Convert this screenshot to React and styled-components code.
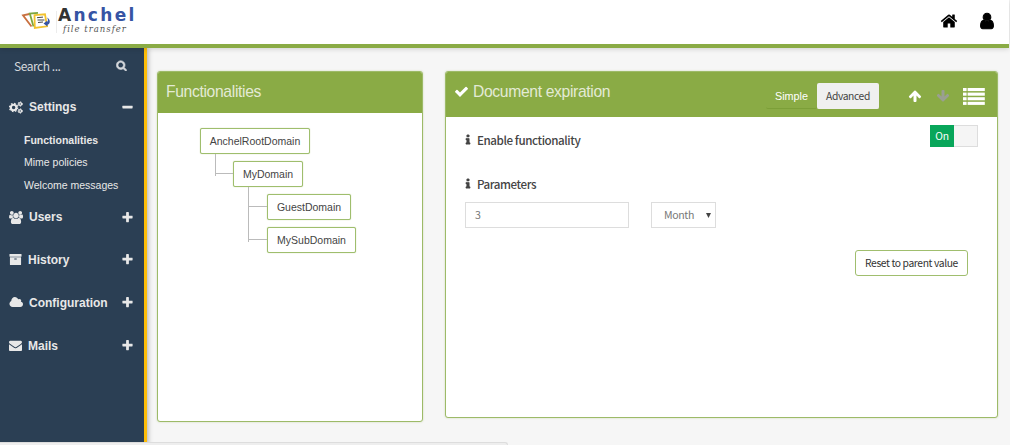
import React from 'react';
import styled, { createGlobalStyle } from 'styled-components';

const Global = createGlobalStyle`
  * { box-sizing: border-box; }
  body { margin: 0; background: #f6f6f6; overflow: hidden; font-family: "Liberation Sans", Arial, sans-serif; }
`;
const source = '"Noto Sans CJK SC", "Open Sans", sans-serif';

const Page = styled.div`width: 1010px; height: 445px; display: flex; flex-direction: column; overflow: hidden;`;
const Header = styled.header`
  height: 48px; flex: none; background: #fff; border-bottom: 4px solid #8aab45; display: flex;
  align-items: flex-start; justify-content: space-between; padding: 0 13px 0 21px;
  box-shadow: 0 1px 5px rgba(0,0,0,.16); z-index: 1; margin-right: 1px;
`;
const Brand = styled.div`display: flex; padding-top: 7px;`;
const Divider = styled.div`width: 1px; height: 22px; background: #ececec; margin: 4px 0 0 5px;`;
const BrandText = styled.div`display: flex; flex-direction: column; padding-left: 1px; height: 32px;`;
const BrandName = styled.div`
  font: 700 17px/17px "DejaVu Sans", sans-serif; color: #3654a4; letter-spacing: 2.3px; white-space: nowrap;
  &::first-letter { color: #333; }
`;
const BrandTag = styled.div`
  font: italic 8.5px/10px "DejaVu Serif", serif; color: #555; padding-left: 5px; letter-spacing: 1px; white-space: nowrap;
`;
const UserNav = styled.nav`display: flex; gap: 20px; padding-top: 12px;`;
const Body = styled.div`flex: 1; display: flex; min-height: 0;`;
const Sidebar = styled.aside`
  width: 147px; flex: none; background: #2b3f54; border-right: 3px solid #fdbd08; color: #e8e8e8;
  box-shadow: 1px 0 5px rgba(0,0,0,.3);
`;
const Search = styled.div`
  height: 35px; display: flex; align-items: center; justify-content: space-between; padding: 0 17px 0 14px;
  font: 12px/20px ${source}; color: #d5d8dc; letter-spacing: -.45px;
`;
const Group = styled.div`
  height: ${p => p.$h || 43}px; display: flex; align-items: center; padding: 0 10px 0 9px;
  font-size: 12px; font-weight: 700; gap: 6px;
`;
const GroupName = styled.span`flex: 1;`;
const SubMenu = styled.div`display: flex; flex-direction: column; height: 70px; padding-left: 24px;`;
const SubItem = styled.div`
  font-size: 10.5px; line-height: 22.4px; position: relative; top: -2px; white-space: nowrap;
  font-weight: ${p => (p.$active ? 700 : 400)};
`;
const Main = styled.main`flex: 1; display: flex; align-items: flex-start; gap: 22px; padding: 23px 0 0 10px;`;
const Panel = styled.section`
  width: ${p => p.$w}px; height: ${p => p.$h}px; background: #fff; border: 1px solid #9dba68;
  border-radius: 3px; box-shadow: 0 0 2px rgba(138,171,69,.4); flex: none;
`;
const PanelHead = styled.div`
  height: ${p => p.$h}px; background: #8aab45; color: #e3ead5; display: flex; padding: ${p => p.$pad};
  border-radius: 2px 2px 0 0; align-items: flex-start;
`;
const Title = styled.h2`margin: 0; font-size: 15.7px; line-height: 18px; font-weight: 400; flex: 1; letter-spacing: -.35px;`;
const Tree = styled.div`padding: 15px 0 0 42px;`;
const Node = styled.div`
  width: ${p => p.$w}px; height: 26px; border: 1px solid #9fbe6d; border-radius: 2px; font-size: 10.5px; color: #444;
  display: flex; align-items: center; justify-content: center; background: #fff; box-shadow: 0 0 1px #a9c47c;
`;
const Children = styled.div`margin-left: 15px; display: flex; flex-direction: column;`;
const Branch = styled.div`
  padding: 7px 0 0 ${p => p.$indent || 18}px; position: relative;
  &::before { content: ''; position: absolute; left: 0; top: 0; width: 1px; height: ${p => (p.$last ? 22 : 33)}px; background: #bbb; }
  &::after { content: ''; position: absolute; left: 0; top: 19px; width: ${p => p.$indent || 18}px; height: 1px; background: #bbb; }
`;
const Modes = styled.div`display: flex; height: 26px; margin-right: 29px;`;
const Mode = styled.div`
  width: ${p => p.$w}px; display: flex; align-items: center; justify-content: center;
  color: ${p => (p.$active ? '#444' : '#fff')}; background: ${p => (p.$active ? '#f0f0f0' : 'transparent')};
  border-bottom: 1px solid ${p => (p.$active ? '#f0f0f0' : '#7c9f38')}; border-radius: 2px;
  font-family: ${p => (p.$active ? source : '"Liberation Sans", sans-serif')};
  font-size: ${p => (p.$active ? 10.3 : 10.8)}px; letter-spacing: ${p => (p.$active ? -0.4 : 0)}px;
`;
const Tools = styled.div`display: flex; align-items: center; gap: 13.5px; height: 26px;`;
const Form = styled.div`padding: 14px 18px 0 19px; display: flex; flex-direction: column;`;
const Row = styled.div`display: flex; align-items: flex-start; justify-content: space-between; height: ${p => p.$h}px;`;
const Label = styled.div`
  display: flex; align-items: center; gap: 6px; font: 500 11.6px/16px ${source}; color: #444;
  letter-spacing: -.42px; padding-top: 1px;
`;
const Switch = styled.div`display: flex; width: 48px; height: 22px; margin: -6px 1px 0 0; border: 1px solid #ddd; border-left: 0; background: #f5f5f5;`;
const SwitchOn = styled.div`width: 24px; margin: -1px 0; background: #08a65a; color: #fff; font: 10.3px/22px ${source}; letter-spacing: -.3px; text-align: center;`;
const Fields = styled.div`display: flex; gap: 22px; height: 48px;`;
const Field = styled.div`
  width: ${p => p.$w}px; height: 26px; border: 1px solid #ddd; background: #fff; padding: 0 ${p => p.$pr || 9}px 0 ${p => p.$pl || 9}px;
  font: 10.6px/24px ${source}; color: #777; display: flex; align-items: center; justify-content: space-between; letter-spacing: -.4px;
`;
const Reset = styled.button`
  align-self: flex-end; margin-right: 11px; width: 113px; height: 26px; border: 1px solid #a0be6e; border-radius: 3px; background: #fff;
  font: 10.3px/20px ${source}; color: #333; padding: 0; white-space: nowrap; letter-spacing: -.38px;
`;
const StatusBubble = styled.div`
  position: absolute; left: 0; bottom: 0; width: 508px; height: 3px; background: #eee; border-top: 1px solid #ddd;
  border-right: 1px solid #ddd; border-radius: 0 3px 0 0; z-index: 2;
`;
const Glyph = styled.svg`display: block; flex: none; fill: ${p => p.$c || 'currentColor'};`;

const paths = {
  plus: 'M1600 736v192q0 40-28 68t-68 28h-416v416q0 40-28 68t-68 28h-192q-40 0-68-28t-28-68v-416h-416q-40 0-68-28t-28-68v-192q0-40 28-68t68-28h416v-416q0-40 28-68t68-28h192q40 0 68 28t28 68v416h416q40 0 68 28t28 68z',
  minus: 'M1600 736v192q0 40-28 68t-68 28h-1216q-40 0-68-28t-28-68v-192q0-40 28-68t68-28h1216q40 0 68 28t28 68z',
  home: 'M1472 992v480q0 26-19 45t-45 19h-384v-384h-256v384h-384q-26 0-45-19t-19-45v-480q0-1 .5-3t.5-3l575-474 575 474q1 2 1 6zm223-69l-62 74q-8 9-21 11h-3q-13 0-21-7l-692-577-692 577q-12 8-24 7-13-2-21-11l-62-74q-8-10-7-23.5t11-21.5l719-599q32-26 76-26t76 26l244 204v-195q0-14 9-23t23-9h192q14 0 23 9t9 23v408l219 182q10 8 11 21.5t-7 23.5z',
  user: 'M1536 1399q0 109-62.5 187t-150.5 78h-854q-88 0-150.5-78t-62.5-187q0-85 8.5-160.5t31.5-152 58.5-131 94-89 134.5-34.5q131 128 313 128t313-128q76 0 134.5 34.5t94 89 58.5 131 31.5 152 8.5 160.5zm-256-887q0 159-112.5 271.5t-271.5 112.5-271.5-112.5-112.5-271.5 112.5-271.5 271.5-112.5 271.5 112.5 112.5 271.5z',
  check: 'M1671 566q0 40-28 68l-724 724-136 136q-28 28-68 28t-68-28l-136-136-362-362q-28-28-28-68t28-68l136-136q28-28 68-28t68 28l294 295 656-657q28-28 68-28t68 28l136 136q28 28 28 68z',
  up: 'M1675 971q0 51-37 90l-75 75q-38 38-91 38-54 0-90-38l-294-293v704q0 52-37.5 84.5t-90.5 32.5h-128q-53 0-90.5-32.5t-37.5-84.5v-704l-294 293q-36 38-90 38t-90-38l-75-75q-38-38-38-90 0-53 38-91l651-651q35-37 90-37 54 0 91 37l651 651q37 39 37 91z',
  search: 'M1216 832q0-185-131.5-316.5t-316.5-131.5-316.5 131.5-131.5 316.5 131.5 316.5 316.5 131.5 316.5-131.5 131.5-316.5zm512 832q0 52-38 90t-90 38q-54 0-90-38l-343-342q-179 124-399 124-143 0-273.5-55.5t-225-150-150-225-55.5-273.5 55.5-273.5 150-225 225-150 273.5-55.5 273.5 55.5 225 150 150 225 55.5 273.5q0 220-124 399l343 343q37 37 37 90z',
  info: 'M1216 1344v128q0 26-19 45t-45 19h-512q-26 0-45-19t-19-45v-128q0-26 19-45t45-19h64v-384h-64q-26 0-45-19t-19-45v-128q0-26 19-45t45-19h384q26 0 45 19t19 45v576h64q26 0 45 19t19 45zm-128-1152v192q0 26-19 45t-45 19h-256q-26 0-45-19t-19-45v-192q0-26 19-45t45-19h256q26 0 45 19t19 45z',
  cloud: 'M1984 1152q0 159-112.5 271.5t-271.5 112.5h-1088q-185 0-316.5-131.5t-131.5-316.5q0-132 71-241.5t187-163.5q-2-28-2-43 0-212 150-362t362-150q158 0 286.5 88t187.5 230q70-62 166-62 106 0 181 75t75 181q0 75-41 138 129 30 213 134.5t84 239.5z',
  envelope: 'M1792 710v794q0 66-47 113t-113 47h-1472q-66 0-113-47t-47-113v-794q44 49 101 87 362 246 497 345 57 42 92.5 65.5t94.5 48 110 24.5h2q51 0 110-24.5t94.5-48 92.5-65.5q170-123 498-345 57-39 100-87zm0-294q0 79-49 151t-122 123q-376 261-468 325-10 7-42.5 31t-54 38.5-52 32.5-57.5 27-50 9h-2q-23 0-50-9t-57.5-27-52-32.5-54-38.5-42.5-31q-91-64-262-182.5t-205-142.5q-62-42-117-115.5t-55-136.5q0-78 41.5-130t118.5-52h1472q65 0 112.5 47t47.5 113z',
  archive: 'M1088 832q0-26-19-45t-45-19h-256q-26 0-45 19t-19 45 19 45 45 19h256q26 0 45-19t19-45zm576-192v960q0 26-19 45t-45 19h-1408q-26 0-45-19t-19-45v-960q0-26 19-45t45-19h1408q26 0 45 19t19 45zm64-448v256q0 26-19 45t-45 19h-1536q-26 0-45-19t-19-45v-256q0-26 19-45t45-19h1536q26 0 45 19t19 45z',
  users: 'M593 896q-162 5-265 128h-134q-82 0-138-40.5t-56-118.5q0-353 124-353 6 0 43.5 21t97.5 42.5 119 21.5q67 0 133-23-5 37-5 66 0 159 93 293zm1071 637q0 120-73 189.5t-194 69.5h-874q-121 0-194-69.5t-73-189.5q0-53 3.5-103.5t14-109 26.5-108.5 43-97.5 62-81 85.5-53.5 111.5-20q10 0 43 21.5t73 48 107 48 135 21.5 135-21.5 107-48 73-48 43-21.5q61 0 111.5 20t85.5 53.5 62 81 43 97.5 26.5 108.5 14 109 3.5 103.5zm-1024-1277q0 106-75 181t-181 75-181-75-75-181 75-181 181-75 181 75 75 181zm704 384q0 159-112.5 271.5t-271.5 112.5-271.5-112.5-112.5-271.5 112.5-271.5 271.5-112.5 271.5 112.5 112.5 271.5zm576 225q0 78-56 118.5t-138 40.5h-134q-103-123-265-128 93-134 93-293 0-29-5-66 66 23 133 23 59 0 119-21.5t97.5-42.5 43.5-21q124 0 124 353zm-128-609q0 106-75 181t-181 75-181-75-75-181 75-181 181-75 181 75 75 181z',
};
const boxes = { cloud: '0 0 1984 1792', users: '0 0 1920 1792', info: '512 0 768 1792' };
const Icon = ({ name, w, h, color, flip, bold }) => (
  <Glyph $c={color} width={w} height={h || w} viewBox={boxes[name] || '0 0 1792 1792'}>
    <path d={paths[name]} stroke="currentColor" strokeWidth={bold || 0} transform={flip ? 'matrix(1 0 0 -1 0 1792)' : undefined} />
  </Glyph>
);
const Cogs = () => (
  <Glyph width="14" height="13" viewBox="0 0 14 13">
    <g fill="none" stroke="#e8e8e8">
      <circle cx="4.6" cy="6.5" r="2.8" strokeWidth="2.1" />
      <circle cx="4.6" cy="6.5" r="4.1" strokeWidth="1.2" strokeDasharray="1.6 1.62" />
      <circle cx="11.2" cy="3" r="1.4" strokeWidth="1.4" />
      <circle cx="11.2" cy="3" r="2.2" strokeWidth=".9" strokeDasharray="1.15 1.15" />
      <circle cx="11.2" cy="10" r="1.4" strokeWidth="1.4" />
      <circle cx="11.2" cy="10" r="2.2" strokeWidth=".9" strokeDasharray="1.15 1.15" />
    </g>
  </Glyph>
);
const ListIcon = () => (
  <Glyph width="22" height="17" viewBox="0 0 22 17" $c="#fff">
    {[0, 4.6, 9.2, 13.8].map(y => (
      <g key={y}><rect x="0" y={y} width="3.6" height="3.1" /><rect x="4.6" y={y} width="17.2" height="3.1" /></g>
    ))}
  </Glyph>
);
const LogoMark = () => (
  <Glyph width="30" height="24" viewBox="0 0 30 24">
    <g fill="none" strokeWidth="1.8">
      <path d="M8.5 7L2 8.3l8.5 11.2" stroke="#c9703f" />
      <path d="M17 5.8L8.8 6.6l3.7 13" stroke="#7ea63f" />
      <path d="M13.5 8.2l10.5-.9 2 12-12.2 1.7z" fill="#fff" stroke="#f2c22e" />
    </g>
    <g fill="none" stroke="#444" strokeWidth="1"><path d="M16 10.7l6-.6M16.5 13h7M17 15.5l5-.5" /></g>
    <path d="M26 10.5c3.5 2 3.8 6 .5 7.3v1.7l-4-3 4-3v1.8c1-1 .6-3-.5-4.8z" fill="#3654a4" />
  </Glyph>
);

export default function App() {
  return (
    <Page>
      <Global />
      <Header>
        <Brand>
          <LogoMark />
          <Divider />
          <BrandText><BrandName>Anchel</BrandName><BrandTag>file transfer</BrandTag></BrandText>
        </Brand>
        <UserNav><Icon name="home" w={18} color="#000" /><Icon name="user" w={18} color="#000" bold={100} /></UserNav>
      </Header>
      <Body>
        <Sidebar>
          <Search><span>Search ...</span><Icon name="search" w={11} bold={110} /></Search>
          <Group $h={48}><Cogs /><GroupName>Settings</GroupName><Icon name="minus" w={13} /></Group>
          <SubMenu>
            <SubItem $active>Functionalities</SubItem>
            <SubItem>Mime policies</SubItem>
            <SubItem>Welcome messages</SubItem>
          </SubMenu>
          <Group $h={32}><Icon name="users" w={14} h={13} /><GroupName>Users</GroupName><Icon name="plus" w={13} /></Group>
          <Group $h={53}><Icon name="archive" w={13} /><GroupName>History</GroupName><Icon name="plus" w={13} /></Group>
          <Group $h={33}><Icon name="cloud" w={14} h={13} /><GroupName>Configuration</GroupName><Icon name="plus" w={13} /></Group>
          <Group $h={53}><Icon name="envelope" w={13} /><GroupName>Mails</GroupName><Icon name="plus" w={13} /></Group>
        </Sidebar>
        <Main>
          <Panel $w={266} $h={351}>
            <PanelHead $h={41} $pad="11px 8px"><Title>Functionalities</Title></PanelHead>
            <Tree>
              <Node $w={110}>AnchelRootDomain</Node>
              <Children>
                <Branch $last>
                  <Node $w={70}>MyDomain</Node>
                  <Children>
                    <Branch $indent={19}><Node $w={84}>GuestDomain</Node></Branch>
                    <Branch $last $indent={19}><Node $w={89}>MySubDomain</Node></Branch>
                  </Children>
                </Branch>
              </Children>
            </Tree>
          </Panel>
          <Panel $w={553} $h={347}>
            <PanelHead $h={45} $pad="11px 12px 0 8px">
              <Icon name="check" w={15} h={17} color="#fff" />
              <Title>&nbsp;Document expiration</Title>
              <Modes><Mode $w={51}>Simple</Mode><Mode $w={62} $active>Advanced</Mode></Modes>
              <Tools>
                <Icon name="up" w={14} color="#fff" />
                <Icon name="up" w={14} color="#9a9f92" flip />
                <ListIcon />
              </Tools>
            </PanelHead>
            <Form>
              <Row $h={44}>
                <Label><Icon name="info" w={6} h={12} bold={60} />Enable functionality</Label>
                <Switch><SwitchOn>On</SwitchOn></Switch>
              </Row>
              <Row $h={27}><Label><Icon name="info" w={6} h={12} bold={60} />Parameters</Label></Row>
              <Fields>
                <Field $w={164}>3</Field>
                <Field $w={65} $pl={12} $pr={4}>Month
                  <Glyph width="5" height="5" viewBox="0 0 5 5" $c="#444"><path d="M0 0h5L2.5 5z" /></Glyph>
                </Field>
              </Fields>
              <Reset>Reset to parent value</Reset>
            </Form>
          </Panel>
        </Main>
      </Body>
      <StatusBubble />
    </Page>
  );
}
